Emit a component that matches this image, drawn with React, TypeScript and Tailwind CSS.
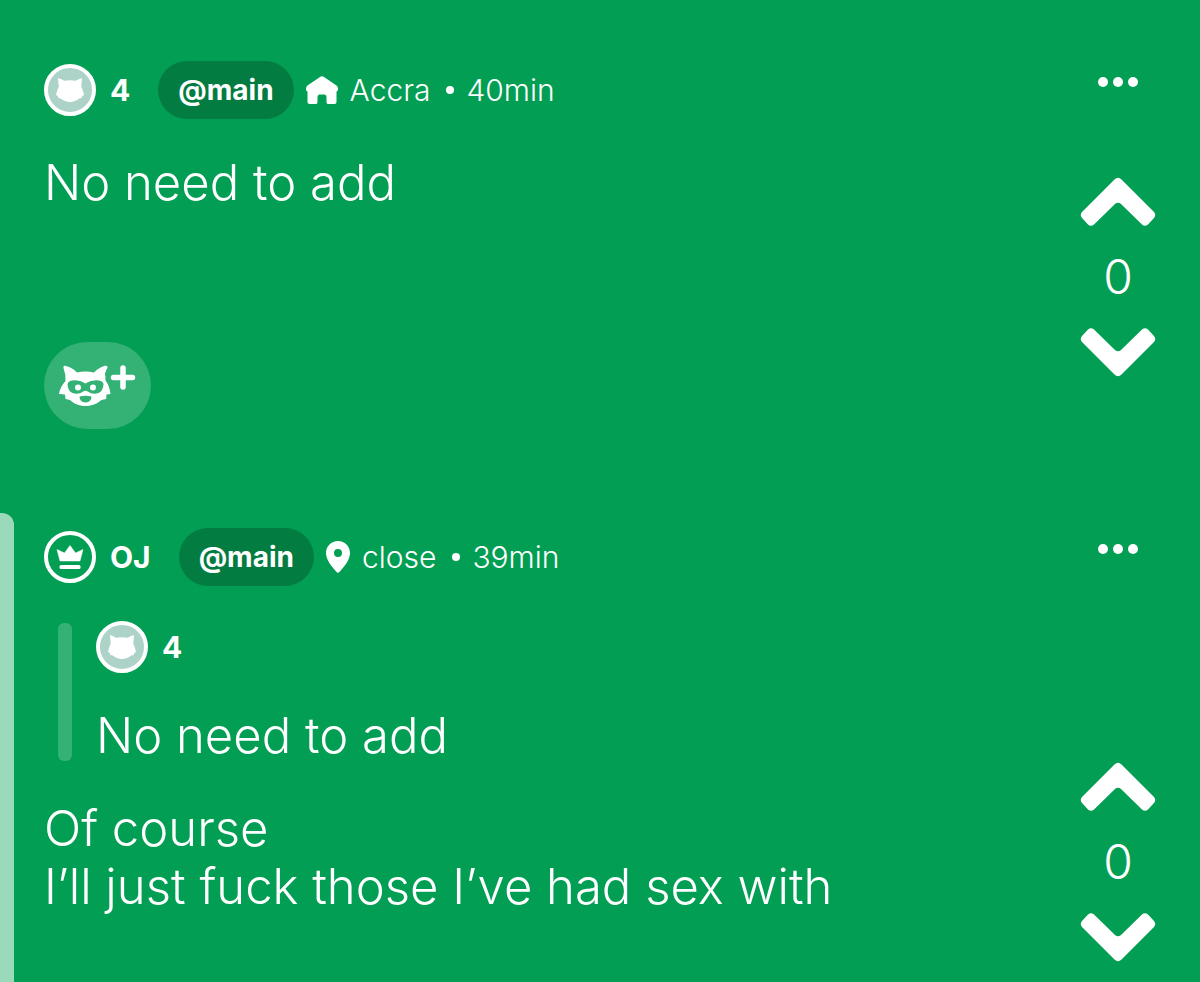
import type { ReactNode } from 'react';

function RaccoonHead({ className }: { className?: string }) {
  return (
    <svg viewBox="0 0 28 24" className={className} fill="currentColor" aria-hidden="true">
      <path d="M2.600 .3C4.800 .8 6.500 1.600 8 2.800Q14 1.600 20 2.800C21.500 1.600 23.200 .8 25.400 .3C26.200 .2 26.100 1 25.900 2L25.200 8.500C26.200 10.500 26.900 12.500 27.400 14.500L28 17L26.200 18L25.600 20L23.300 20.600C20.500 22.900 17.500 24 14 24S7.500 22.900 4.700 20.600L2.400 20L1.800 18L0 17L.6 14.500C1.100 12.500 1.800 10.500 2.800 8.500L2.100 2C1.900 1 1.800 .2 2.600 .3Z" />
    </svg>
  );
}

function Avatar() {
  return (
    <span className="flex size-[52px] items-center justify-center rounded-full border-4 border-white bg-[#add2c7]">
      <RaccoonHead className="w-7" />
    </span>
  );
}

function CrownBadge() {
  return (
    <svg viewBox="0 0 52 52" className="size-[52px]" fill="currentColor" aria-hidden="true">
      <circle cx="26" cy="26" r="24" fill="none" stroke="currentColor" strokeWidth="4" />
      <path d="M13 18.500L20.500 22L26 14.500L31.500 22L39 18.500L36 30H16Z" stroke="currentColor" strokeWidth=".5" strokeLinejoin="round" />
      <rect x="15.500" y="34" width="21" height="4" rx="1.500" />
    </svg>
  );
}

function HomeIcon() {
  return (
    <svg viewBox="0 0 32 28" className="w-8" fill="currentColor" aria-hidden="true">
      <path d="M14 .9Q16-.6 18 .9L30.500 9.500Q32.300 11 32 13.500Q31.800 15.500 30.500 15.500V26Q30.500 28 28.500 28H22Q20.500 28 20.500 26V21Q20.500 18.500 18 18.500H14Q11.500 18.500 11.500 21V26Q11.500 28 10 28H3.500Q1.500 28 1.500 26V15.500Q.2 15.500 0 13.500Q-.3 11 1.500 9.500Z" />
    </svg>
  );
}

function PinIcon() {
  return (
    <svg viewBox="0 0 24 32" className="w-6" fill="currentColor" aria-hidden="true">
      <path fillRule="evenodd" d="M12 0C5.200 0 0 5.200 0 12C0 19 5.500 25 10.500 31Q12 32.400 13.500 31C18.500 25 24 19 24 12C24 5.200 18.800 0 12 0ZM12 8A4 4 0 1 1 12 16A4 4 0 1 1 12 8Z" />
    </svg>
  );
}

function ReactionIcon() {
  return (
    <svg viewBox="0 0 78 42" className="w-[78px]" aria-hidden="true">
      <path
        fill="white"
        d="M6 .8C10.500 1.700 14.500 3.800 18 7.500Q26.500 5.500 35 7.500C38.500 3.800 42 2 46 .8Q49 .1 48.500 3Q45 8 46.500 12Q45.800 14.500 47.500 17Q50.500 21 51.500 29L47.500 29.500L47.200 34L42.500 35C38 38.500 33.500 41 26.500 41S15 38.500 11 35L6.500 34L6 29.500L0 29Q1 22 6.500 16Q7 10 4.500 3Q4 .2 6 .8Z"
      />
      <path
        fill="#34b174"
        d="M8.500 19Q9 15.200 16 15.200Q21.500 15.200 26.500 18.500Q31.500 15.200 37 15.200Q44 15.200 44.500 19Q44.200 26 39.500 28Q33.500 30 28.800 26.500Q26.500 25 24.200 26.500Q19.500 30 13.500 28Q8.800 26 8.500 19Z"
      />
      <circle cx="19" cy="22.500" r="3" fill="white" />
      <circle cx="34" cy="22.500" r="3" fill="white" />
      <path fill="#34b174" d="M20.500 31.500Q26.500 29.800 32.500 31.500Q32.500 37 26.500 37.500Q20.500 37 20.500 31.500Z" />
      <path d="M54.500 12.500H73.500M64 3V22" stroke="white" strokeWidth="5.500" strokeLinecap="round" />
    </svg>
  );
}

function Arrow({ down }: { down?: boolean }) {
  return (
    <svg viewBox="0 0 76 50" className={down ? 'w-[76px] rotate-180' : 'w-[76px]'} fill="currentColor" aria-hidden="true">
      <path d="M34.500 2.500Q38-.8 41.500 2.500L74 35Q76.500 38 74 41L68 47.500Q65 50 62 47.500L41 27Q38 24.500 35 27L14 47.500Q11 50 8 47.500L2 41Q-.5 38 2 35Z" />
    </svg>
  );
}

function PostActions({ votes }: { votes: number }) {
  return (
    <>
      <button type="button" aria-label="More options" className="flex gap-[5px] py-2">
        <span className="size-[10px] rounded-full bg-white" />
        <span className="size-[10px] rounded-full bg-white" />
        <span className="size-[10px] rounded-full bg-white" />
      </button>
      <div className="flex flex-col items-center">
        <button type="button" aria-label="Upvote">
          <Arrow />
        </button>
        <span className="mt-[21px] mb-[21px] text-[48px] leading-[58px]">{votes}</span>
        <button type="button" aria-label="Downvote">
          <Arrow down />
        </button>
      </div>
    </>
  );
}

type HeaderProps = { avatar: ReactNode; name: string; icon: ReactNode; place: string; time: string };

function PostHeader({ avatar, name, icon, place, time }: HeaderProps) {
  return (
    <header className="flex h-[58px] items-center text-[30px]">
      {avatar}
      <span className="ml-[14px] font-bold">{name}</span>
      <a href="#main" className="ml-7 flex h-full items-center rounded-full bg-[#037c42] px-5 text-[28px] font-bold">
        @main
      </a>
      <span className="ml-3 flex items-center gap-3">
        {icon}
        {place}
      </span>
      <span className="mr-3 ml-4 size-2 rounded-full bg-white" />
      <time>{time}</time>
    </header>
  );
}

export default function App() {
  return (
    <main className="flex min-h-screen flex-col bg-[#029e53] font-['Inter',sans-serif] font-light text-white">
      <article className="flex justify-between pt-[61px] pr-11 pb-[84px] pl-11">
        <div>
          <PostHeader avatar={<Avatar />} name="4" icon={<HomeIcon />} place="Accra" time="40min" />
          <p className="mt-[35px] text-[49px] leading-[58px]">No need to add</p>
          <button
            type="button"
            aria-label="Add reaction"
            className="mt-[130px] flex h-[87px] w-[107px] items-center justify-center rounded-[44px] bg-[#34b174]"
          >
            <ReactionIcon />
          </button>
        </div>
        <div className="flex flex-col items-center gap-[82px] pt-2">
          <PostActions votes={0} />
        </div>
      </article>

      <article className="flex grow">
        <div className="w-[14px] shrink-0 rounded-tr-xl bg-[#9bd9bb]" />
        <div className="flex grow justify-between pt-[15px] pr-11 pb-5 pl-[30px]">
          <div>
            <PostHeader avatar={<CrownBadge />} name="OJ" icon={<PinIcon />} place="close" time="39min" />
            <blockquote className="mt-[35px] ml-[14px] flex gap-6">
              <div className="mt-[2px] mb-1 w-[14px] rounded-md bg-[#34b174]" />
              <div>
                <div className="flex items-center gap-[14px] text-[30px] font-bold">
                  <Avatar />
                  4
                </div>
                <p className="mt-[34px] text-[49px] leading-[58px]">No need to add</p>
              </div>
            </blockquote>
            <p className="mt-[35px] text-[49px] leading-[58px]">
              Of course
              <br />
              I’ll just fuck those I’ve had sex with
            </p>
          </div>
          <div className="flex flex-col items-center justify-between pt-2">
            <PostActions votes={0} />
          </div>
        </div>
      </article>
    </main>
  );
}
